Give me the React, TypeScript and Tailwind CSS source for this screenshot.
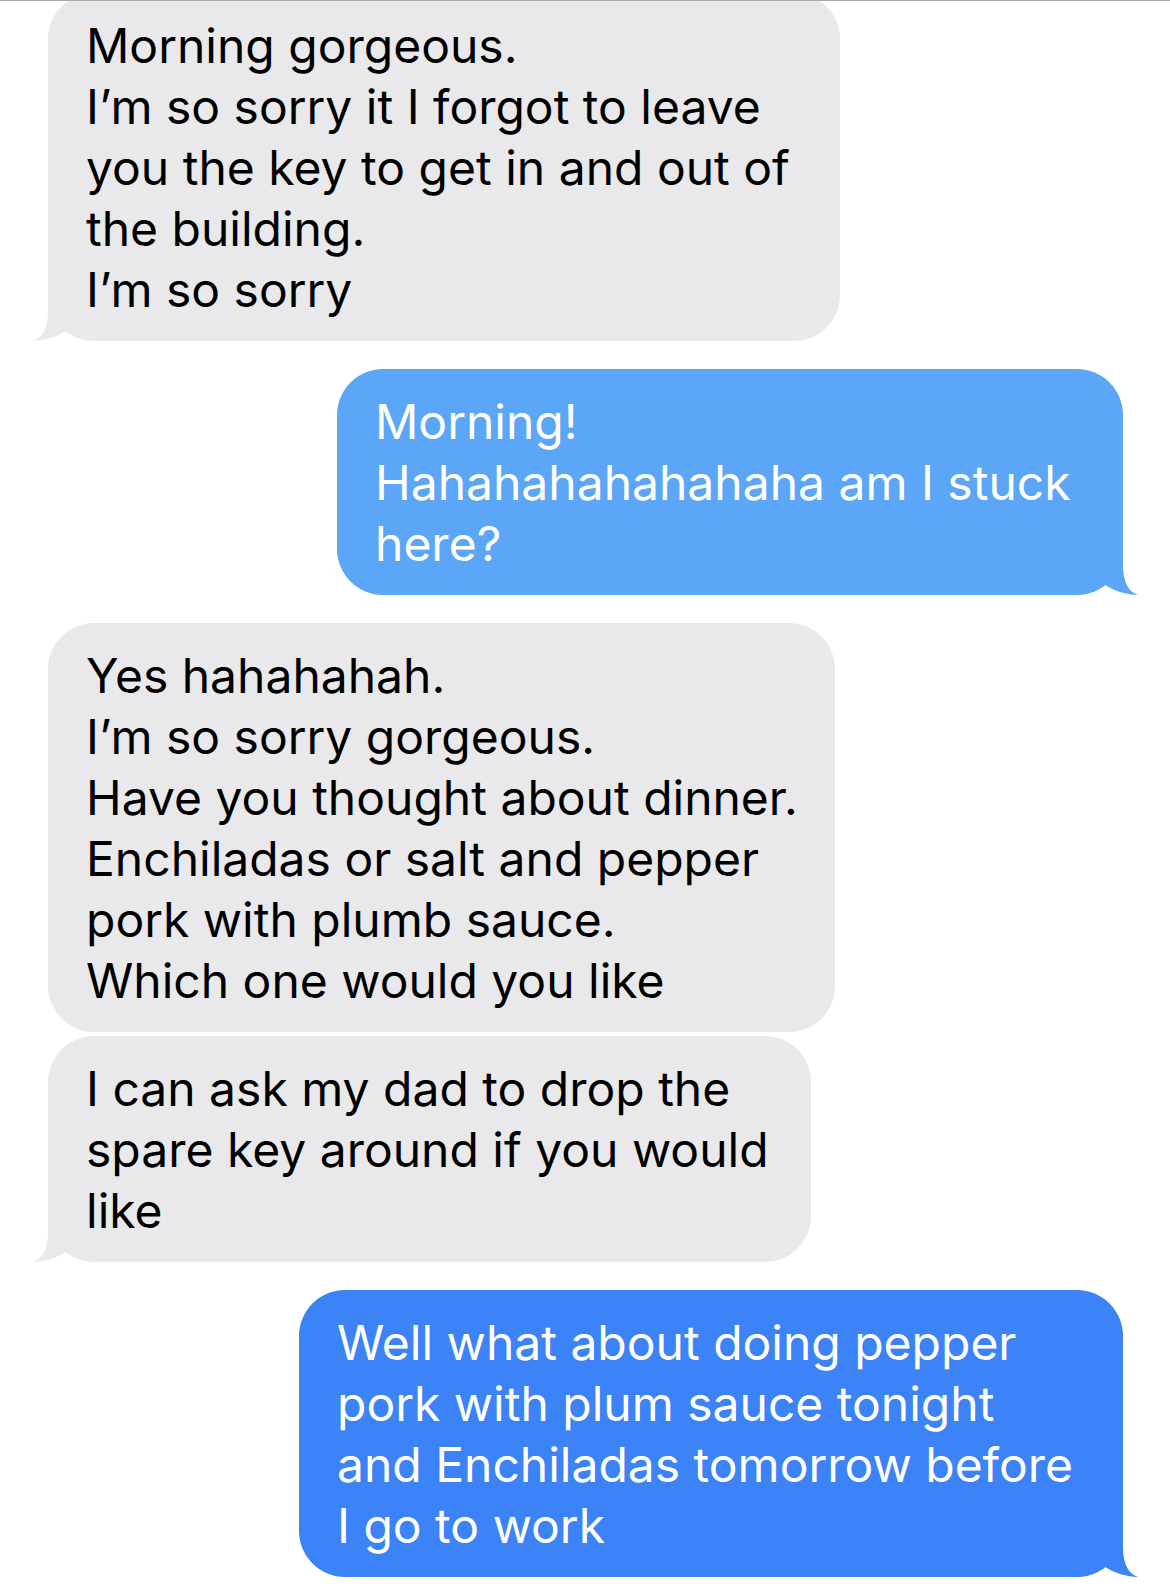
import React from "react";

type Msg = { side: "left" | "right"; lines: string[]; width: number; color: string; tail: boolean; mt: number };

const msgs: Msg[] = [
  { side: "left", lines: ["Morning gorgeous.", "I\u2019m so sorry it I forgot to leave", "you the key to get in and out of", "the building.", "I\u2019m so sorry"], width: 792, color: "#e9e9eb", tail: true, mt: 0 },
  { side: "right", lines: ["Morning!", "Hahahahahahahaha am I stuck", "here?"], width: 786, color: "#5ba6f6", tail: true, mt: 28 },
  { side: "left", lines: ["Yes hahahahah.", "I\u2019m so sorry gorgeous.", "Have you thought about dinner.", "Enchiladas or salt and pepper", "pork with plumb sauce.", "Which one would you like"], width: 787, color: "#e9e9eb", tail: false, mt: 28 },
  { side: "left", lines: ["I can ask my dad to drop the", "spare key around if you would", "like"], width: 763, color: "#e9e9eb", tail: true, mt: 4 },
  { side: "right", lines: ["Well what about doing pepper", "pork with plum sauce tonight", "and Enchiladas tomorrow before", "I go to work"], width: 824, color: "#3b83f6", tail: true, mt: 28 },
];

function LeftTail({ color }: { color: string }) {
  return (
    <svg className="absolute left-[-16px] bottom-0" width="72" height="52" viewBox="-16 -52 72 52">
      <path d="M0 -52 L0 -30 C0 -12 -6 -3 -15 0 C-5 0 10 -4 19 -11 C28 -3 38 0 52 0 L52 -52 Z" fill={color} />
    </svg>
  );
}

function RightTail({ color }: { color: string }) {
  return (
    <svg className="absolute right-[-16px] bottom-0" width="72" height="52" viewBox="-56 -52 72 52">
      <path d="M0 -52 L0 -30 C0 -12 6 -3 15 0 C5 0 -10 -4 -19 -11 C-28 -3 -38 0 -52 0 L-52 -52 Z" fill={color} />
    </svg>
  );
}

export default function App() {
  return (
    <div className="relative w-[1170px] h-[1589px] overflow-hidden bg-white" style={{ fontFamily: "Inter, 'Noto Sans', sans-serif" }}>
      <div className="absolute top-0 left-0 right-0 h-px bg-[#a8a8a8] z-10" />
      <div className="flex flex-col mt-[-7px]">
        {msgs.map((m, i) => (
          <div key={i} className={m.side === "left" ? "flex justify-start pl-[48px]" : "flex justify-end pr-[47px]"} style={{ marginTop: m.mt }}>
            <div
              className={
                "relative rounded-[46px] pt-[22px] pb-[21px] pl-[38px] text-[48px] leading-[61px] " +
                (m.side === "left" ? "text-black" : "text-white")
              }
              style={{ width: m.width, backgroundColor: m.color }}
            >
              {m.tail && (m.side === "left" ? <LeftTail color={m.color} /> : <RightTail color={m.color} />)}
              <div className="relative">
                {m.lines.map((l, j) => (
                  <div key={j} className="whitespace-nowrap">{l}</div>
                ))}
              </div>
            </div>
          </div>
        ))}
      </div>
    </div>
  );
}
